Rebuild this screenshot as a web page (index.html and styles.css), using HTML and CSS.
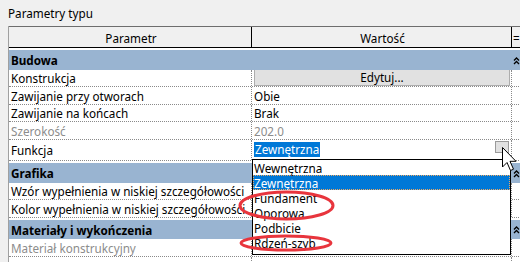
FILE: index.html
```html
<!DOCTYPE html>
<html lang="pl">
<head>
    <meta charset="UTF-8">
    <title>Parametry typu</title>
    <link rel="stylesheet" href="styles.css">
</head>
<body>
    <div class="title">Parametry typu</div>
    <div class="grid">
        <div class="row head">
            <div class="c1">Parametr</div>
            <div class="c2">Wartość</div>
            <div class="c3">=</div>
        </div>

        <div class="band">
            <div class="c1">Budowa</div>
            <div class="c2"></div>
            <div class="c3"><svg class="fold" width="7" height="9" viewBox="0 0 7 9"><path d="M1 4.5 L3.5 2 L6 4.5 M1 8 L3.5 5.5 L6 8" fill="none" stroke="#000" stroke-width="1.3"/></svg></div>
        </div>
        <div class="row">
            <div class="c1">Konstrukcja</div>
            <div class="c2"><div class="edit">Edytuj...</div></div>
            <div class="c3"></div>
        </div>
        <div class="row">
            <div class="c1">Zawijanie przy otworach</div>
            <div class="c2">Obie</div>
            <div class="c3"></div>
        </div>
        <div class="row">
            <div class="c1">Zawijanie na końcach</div>
            <div class="c2">Brak</div>
            <div class="c3"></div>
        </div>
        <div class="row muted">
            <div class="c1">Szerokość</div>
            <div class="c2">202.0</div>
            <div class="c3"></div>
        </div>
        <div class="row tall">
            <div class="c1">Funkcja</div>
            <div class="c2">
                <span class="picked">Zewnętrzna</span>
                <span class="drop"></span>
            </div>
            <div class="c3"></div>
        </div>

        <div class="band">
            <div class="c1">Grafika</div>
            <div class="c2"></div>
            <div class="c3"><svg class="fold" width="7" height="9" viewBox="0 0 7 9"><path d="M1 4.5 L3.5 2 L6 4.5 M1 8 L3.5 5.5 L6 8" fill="none" stroke="#000" stroke-width="1.3"/></svg></div>
        </div>
        <div class="row">
            <div class="c1">Wzór wypełnienia w niskiej szczegółowości</div>
            <div class="c2"></div>
            <div class="c3"></div>
        </div>
        <div class="row">
            <div class="c1">Kolor wypełnienia w niskiej szczegółowości</div>
            <div class="c2"></div>
            <div class="c3"></div>
        </div>

        <div class="band">
            <div class="c1">Materiały i wykończenia</div>
            <div class="c2"></div>
            <div class="c3"><svg class="fold" width="7" height="9" viewBox="0 0 7 9"><path d="M1 4.5 L3.5 2 L6 4.5 M1 8 L3.5 5.5 L6 8" fill="none" stroke="#000" stroke-width="1.3"/></svg></div>
        </div>
        <div class="row muted">
            <div class="c1">Materiał konstrukcyjny</div>
            <div class="c2"></div>
            <div class="c3"></div>
        </div>
        <div class="row">
            <div class="c1"></div>
            <div class="c2"></div>
            <div class="c3"></div>
        </div>
    </div>

    <!-- open list of the Funkcja combo -->
    <div class="combo-list">
        <div class="opt">Wewnętrzna</div>
        <div class="opt on">Zewnętrzna</div>
        <div class="opt">Fundament</div>
        <div class="opt">Oporowa</div>
        <div class="opt">Podbicie</div>
        <div class="opt">Rdzeń-szyb</div>
    </div>

    <svg class="marks" width="520" height="262" viewBox="0 0 520 262">
        <ellipse cx="286.5" cy="205.5" rx="46.5" ry="13.5" fill="none" stroke="#e8353d" stroke-width="3"/>
        <ellipse cx="286" cy="243" rx="45" ry="7" fill="none" stroke="#e8353d" stroke-width="3"/>
        <path d="M502.5 147.5 L502.5 167 L507 162.5 L510.5 170.5 L513.5 169.2 L510 161.3 L516 161.3 Z" fill="#fff" stroke="#000" stroke-width="1" stroke-linejoin="miter"/>
    </svg>
</body>
</html>
```

FILE: styles.css
```css
body {
    margin: 0;
    width: 520px;
    height: 262px;
    overflow: hidden;
    position: relative;
    background-color: #f0f0f0;
    font-family: "Noto Sans", "Liberation Sans", sans-serif;
    font-size: 11.7px;
    color: #000;
}
.title {
    padding: 6px 0 0 8px;
    height: 20px;
    line-height: 15px;
}
.grid {
    margin-left: 8px;
    width: 530px;
    border-left: 1px solid #a0a0a0;
    background-color: #fff;
}
.row {
    display: flex;
    height: 16.5px;
    border-bottom: 1px dotted #8a8a8a;
    background-color: #fff;
}
.c1, .c2, .c3 {
    display: flex;
    align-items: center;
    white-space: nowrap;
    overflow: hidden;
    padding-top: 1px;
}
.c1 {
    width: 240px;
    padding-left: 2px;
}
.c2 {
    width: 257px;
    padding-left: 2px;
    border-left: 1px dotted #8a8a8a;
}
.c3 {
    flex: 1;
    padding-left: 1px;
    border-left: 1px dotted #8a8a8a;
}
.row.head {
    height: 20px;
    border-top: 1px solid #6d6d6d;
    border-bottom: 1px solid #000;
    background-color: #f0f0f0;
}
.row.head .c1,
.row.head .c2 {
    justify-content: center;
}
.row.head .c2,
.row.head .c3 {
    border-left: 1px solid #000;
}
.row.muted {
    color: #8c8c8c;
}
.row.tall {
    height: 20.5px;
}
.row.tall .c2 {
    padding-top: 0;
}
.band {
    display: flex;
    height: 19.5px;
    margin-top: 2px;
    background-color: #99b4d1;
    font-weight: bold;
}
.band .c2,
.band .c3 {
    border-left: 1px solid transparent;
}
.fold {
    display: block;
}
.edit {
    flex: 1;
    height: 15px;
    margin-right: 1px;
    margin-bottom: 1px;
    line-height: 15px;
    text-align: center;
    background-color: #e1e1e1;
    border: 1px solid #adadad;
}
.picked {
    padding: 0 1px;
    line-height: 15px;
    background-color: #0078d7;
    color: #fff;
}
.drop {
    width: 12px;
    height: 10px;
    margin-left: auto;
    margin-right: 2px;
    margin-bottom: 6px;
    background-color: #e1e1e1;
    border: 1px solid #9a9a9a;
}
.combo-list {
    position: absolute;
    left: 252px;
    top: 159px;
    width: 257px;
    height: 94px;
    border: 1px solid #000;
    background-color: #fff;
}
.opt {
    height: 15px;
    line-height: 17px;
    padding-left: 1px;
}
.opt.on {
    height: 13px;
    line-height: 14px;
    background-color: #0078d7;
    color: #fff;
    border: 1px dotted #f0a860;
    padding-left: 0;
}
.marks {
    position: absolute;
    left: 0;
    top: 0;
}
```
